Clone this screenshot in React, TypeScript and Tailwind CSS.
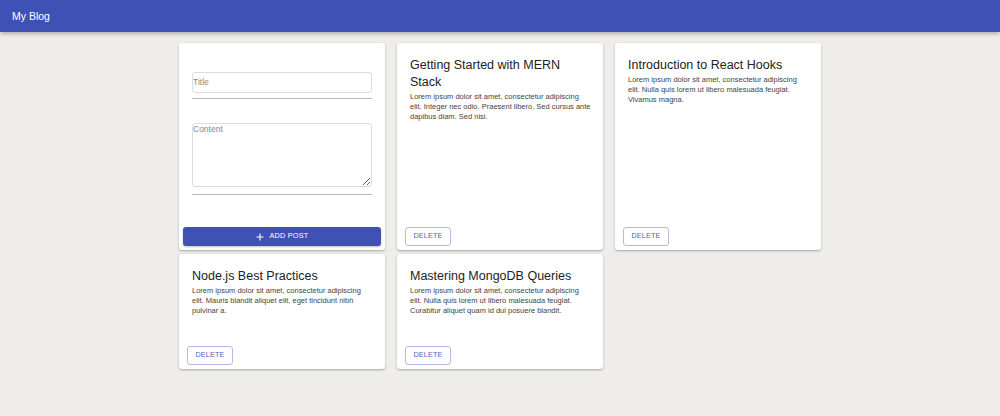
import React from 'react';

const posts = [
  {
    title: 'Getting Started with MERN Stack',
    body: 'Lorem ipsum dolor sit amet, consectetur adipiscing elit. Integer nec odio. Praesent libero. Sed cursus ante dapibus diam. Sed nisi.',
  },
  {
    title: 'Introduction to React Hooks',
    body: 'Lorem ipsum dolor sit amet, consectetur adipiscing elit. Nulla quis lorem ut libero malesuada feugiat. Vivamus magna.',
  },
  {
    title: 'Node.js Best Practices',
    body: 'Lorem ipsum dolor sit amet, consectetur adipiscing elit. Mauris blandit aliquet elit, eget tincidunt nibh pulvinar a.',
  },
  {
    title: 'Mastering MongoDB Queries',
    body: 'Lorem ipsum dolor sit amet, consectetur adipiscing elit. Nulla quis lorem ut libero malesuada feugiat. Curabitur aliquet quam id dui posuere blandit.',
  },
];

const card =
  'bg-white rounded-[3px] shadow-[0_1px_3px_rgba(0,0,0,0.2),0_1px_1px_rgba(0,0,0,0.12)] flex flex-col';

const PostForm: React.FC = () => {
  return (
    <div className={card}>
      <div className="flex flex-col px-[13px] pt-[29px]">
        <input
          placeholder="Title"
          className="h-[21px] w-full rounded-[3px] border border-[#dcdcdc] p-0 pb-[2px] text-[8.5px] text-[#333] outline-none placeholder:text-[#8a8a8a]"
        />
        <div className="mt-[5px] h-px bg-[#b8b8b8]" />
        <textarea
          placeholder="Content"
          className="mt-[24px] h-[64px] w-full rounded-[3px] border border-[#dcdcdc] p-0 text-[8.5px] leading-[10px] text-[#333] outline-none placeholder:text-[#8a8a8a]"
        />
        <div className="mt-[7px] h-px bg-[#b8b8b8]" />
      </div>
      {/* Submit */}
      <button className="mx-[4px] mb-[4px] mt-auto flex h-[19px] items-center justify-center gap-[6px] rounded-[3px] bg-[#3f51b5] text-[7.3px] uppercase tracking-[0.2px] text-white shadow-[0_1px_2px_rgba(0,0,0,0.25)]">
        <svg width="8" height="8" viewBox="0 0 8 8" fill="none" stroke="white" strokeWidth="1.1">
          <path d="M4 0.5v7M0.5 4h7" />
        </svg>
        Add Post
      </button>
    </div>
  );
};

const PostCard: React.FC<{ title: string; body: string }> = ({ title, body }) => {
  return (
    <div className={card}>
      <div className="pl-[13px] pr-[12px] pt-[13.5px]">
        <h2 className="text-[12.5px] leading-[17px] text-[#222]">{title}</h2>
        <p className="pt-[1px] text-[7.5px] leading-[10px] text-[#444]">{body}</p>
      </div>
      <div className="mt-auto pb-[4px] pl-[8px]">
        <button className="h-[19px] w-[46px] rounded-[3px] border border-[#b3bae3] text-[7.2px] uppercase tracking-[0.2px] text-[#5262bd]">
          Delete
        </button>
      </div>
    </div>
  );
};

export default function App() {
  return (
    <div className="min-h-screen bg-[#eeedeb] font-['Liberation_Sans',Arial,sans-serif]">
      <header className="flex h-8 items-center bg-[#3f51b5] px-3 pt-px text-[10.5px] text-white shadow-[0_2px_4px_rgba(0,0,0,0.25)]">
        My Blog
      </header>
      <main className="pt-[11px]">
        <div className="mx-auto grid w-[642px] grid-cols-3 grid-rows-[207px_115px] gap-x-3 gap-y-1">
          <PostForm />
          {posts.map((p) => (
            <PostCard key={p.title} title={p.title} body={p.body} />
          ))}
        </div>
      </main>
    </div>
  );
}
